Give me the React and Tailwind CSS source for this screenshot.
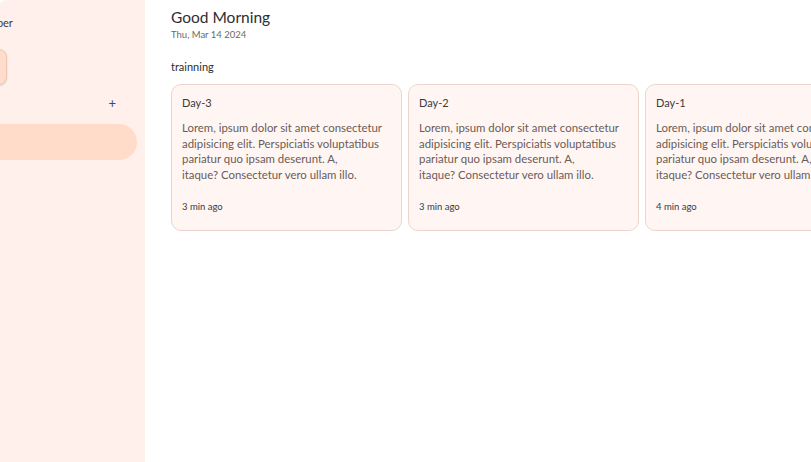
export default function App() {
  const cards = [
    { t: "Day-3", ago: "3 min ago" },
    { t: "Day-2", ago: "3 min ago" },
    { t: "Day-1", ago: "4 min ago" },
  ];
  return (
    <div className="flex h-[462px] w-[811px] overflow-hidden bg-white" style={{ fontFamily: "Lato, 'Open Sans', sans-serif" }}>
      <aside className="flex w-[145px] shrink-0 flex-col overflow-hidden rounded-tl-[6px] bg-[#fff0eb] pr-2">
        <div className="ml-[-28px] mt-[16px] text-[11px] leading-[14px] text-[#3a3a3a]">Member</div>
        <div className="ml-[-100px] mt-[19px] h-[36px] w-[107px] shrink-0 rounded-lg border border-[#f0c6b2] bg-[#ffdccb] shadow-[0_1px_2px_rgba(0,0,0,0.12)]"></div>
        <div className="mt-[10px] flex h-[16px] justify-end pr-[21px] text-[13px] leading-[16px] text-[#3b4a6b]">+</div>
        <div className="ml-[-100px] mt-[13px] h-[36px] shrink-0 rounded-full bg-[#ffdcca]"></div>
      </aside>
      <main className="flex min-w-0 flex-1 flex-col pl-[26px] pt-[7px]">
        <h1 className="text-[15.5px] leading-[20px] text-[#2e2e2e]">Good Morning</h1>
        <div className="mt-[2px] text-[9.5px] leading-[12px] text-[#6a6a6a]">Thu, Mar 14 2024</div>
        <div className="mt-[19px] text-[11px] leading-[14px] text-[#2e2e2e]">trainning</div>
        <div className="mt-[10px] flex gap-[6px] overflow-hidden">
          {cards.map((c) => (
            <div key={c.t} className="flex h-[147px] w-[231px] shrink-0 flex-col rounded-[10px] border border-[#ecd5cc] bg-[#fff6f4] px-[10px] pt-[10px]">
              <div className="text-[11px] leading-[16px] text-[#3a3a3a]">{c.t}</div>
              <p className="mt-[9px] whitespace-nowrap text-[11.4px] leading-[15.7px] text-[#6b5b56]">
                Lorem, ipsum dolor sit amet consectetur<br />
                adipisicing elit. Perspiciatis voluptatibus<br />
                pariatur quo ipsam deserunt. A,<br />
                itaque? Consectetur vero ullam illo.
              </p>
              <div className="mt-[18px] text-[9.5px] leading-[12px] text-[#3a3a3a]">{c.ago}</div>
            </div>
          ))}
        </div>
      </main>
    </div>
  );
}
